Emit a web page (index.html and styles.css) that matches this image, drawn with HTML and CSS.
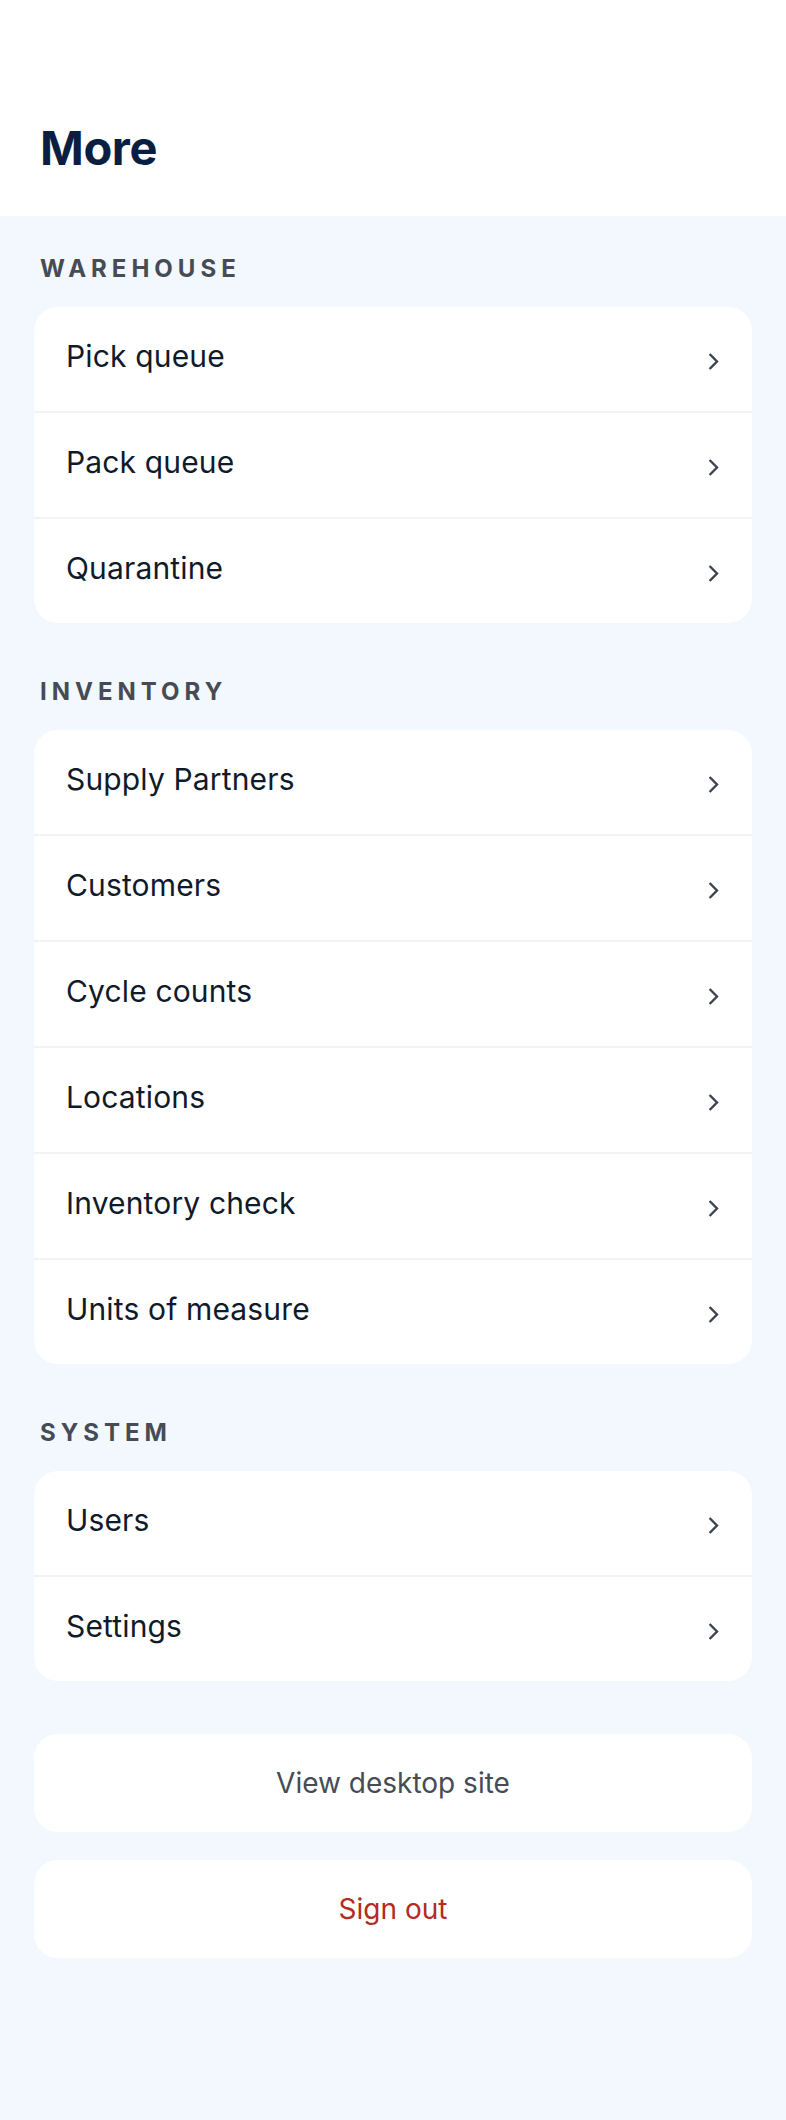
FILE: index.html
```html
<!DOCTYPE html>
<html lang="en">
<head>
<meta charset="utf-8">
<title>More</title>
<link rel="stylesheet" href="styles.css">
</head>
<body>
<header class="top">
  <h1 class="title">More</h1>
</header>
<main class="content">
  <section class="group">
    <h2 class="group-label">Warehouse</h2>
    <ul class="card">
      <li class="row"><span class="row-text">Pick queue</span><svg class="chev" viewBox="0 0 11 17" width="11" height="17"><path d="M1.6 1 L9 8.5 L1.6 16"/></svg></li>
      <li class="row"><span class="row-text">Pack queue</span><svg class="chev" viewBox="0 0 11 17" width="11" height="17"><path d="M1.6 1 L9 8.5 L1.6 16"/></svg></li>
      <li class="row"><span class="row-text">Quarantine</span><svg class="chev" viewBox="0 0 11 17" width="11" height="17"><path d="M1.6 1 L9 8.5 L1.6 16"/></svg></li>
    </ul>
  </section>
  <section class="group">
    <h2 class="group-label">Inventory</h2>
    <ul class="card">
      <li class="row"><span class="row-text">Supply Partners</span><svg class="chev" viewBox="0 0 11 17" width="11" height="17"><path d="M1.6 1 L9 8.5 L1.6 16"/></svg></li>
      <li class="row"><span class="row-text">Customers</span><svg class="chev" viewBox="0 0 11 17" width="11" height="17"><path d="M1.6 1 L9 8.5 L1.6 16"/></svg></li>
      <li class="row"><span class="row-text">Cycle counts</span><svg class="chev" viewBox="0 0 11 17" width="11" height="17"><path d="M1.6 1 L9 8.5 L1.6 16"/></svg></li>
      <li class="row"><span class="row-text">Locations</span><svg class="chev" viewBox="0 0 11 17" width="11" height="17"><path d="M1.6 1 L9 8.5 L1.6 16"/></svg></li>
      <li class="row"><span class="row-text">Inventory check</span><svg class="chev" viewBox="0 0 11 17" width="11" height="17"><path d="M1.6 1 L9 8.5 L1.6 16"/></svg></li>
      <li class="row"><span class="row-text">Units of measure</span><svg class="chev" viewBox="0 0 11 17" width="11" height="17"><path d="M1.6 1 L9 8.5 L1.6 16"/></svg></li>
    </ul>
  </section>
  <section class="group">
    <h2 class="group-label">System</h2>
    <ul class="card">
      <li class="row"><span class="row-text">Users</span><svg class="chev" viewBox="0 0 11 17" width="11" height="17"><path d="M1.6 1 L9 8.5 L1.6 16"/></svg></li>
      <li class="row"><span class="row-text">Settings</span><svg class="chev" viewBox="0 0 11 17" width="11" height="17"><path d="M1.6 1 L9 8.5 L1.6 16"/></svg></li>
    </ul>
  </section>
  <div class="actions">
    <button class="btn btn-plain" type="button">View desktop site</button>
    <button class="btn btn-danger" type="button">Sign out</button>
  </div>
</main>
</body>
</html>
```
FILE: styles.css
```css
* { box-sizing: border-box; }

html, body {
  margin: 0;
  padding: 0;
}

body {
  background: #f2f8fd;
  font-family: Inter, "Noto Sans", "Liberation Sans", sans-serif;
  min-height: 2120px;
}

.top {
  background: #ffffff;
  padding: 121px 40px 41px 40px;
}

.title {
  margin: 0;
  font-size: 47px;
  line-height: 54px;
  font-weight: 700;
  color: #0a1e42;
  letter-spacing: -0.4px;
}

.content {
  padding: 0 34px;
}

.group {
  margin-top: 55px;
}

.group:first-child {
  margin-top: 39px;
}

.group-label {
  margin: 0 0 24px 6px;
  font-size: 24px;
  line-height: 28px;
  font-weight: 700;
  letter-spacing: 5px;
  text-transform: uppercase;
  color: #464b55;
}

.card {
  list-style: none;
  margin: 0;
  padding: 0;
  background: #ffffff;
  border-radius: 24px;
  overflow: hidden;
}

.row {
  display: flex;
  justify-content: space-between;
  align-items: flex-start;
  padding: 29px 33px 35px 32px;
}

.row + .row {
  border-top: 2px solid #f2f3f5;
}

.row-text {
  font-size: 30px;
  line-height: 40px;
  color: #0f1a2b;
  letter-spacing: 0.15px;
}

.chev {
  flex: none;
  margin-top: 17px;
}

.chev path {
  fill: none;
  stroke: #3d4350;
  stroke-width: 2.4;
}

.actions {
  display: flex;
  flex-direction: column;
  gap: 28px;
  margin-top: 53px;
}

.btn {
  display: block;
  width: 100%;
  border: 0;
  background: #ffffff;
  border-radius: 24px;
  padding: 31px 16px;
  font-family: inherit;
  font-size: 28px;
  line-height: 36px;
  text-align: center;
}

.btn-plain {
  color: #464b55;
}

.btn-danger {
  color: #b52a22;
}
```
